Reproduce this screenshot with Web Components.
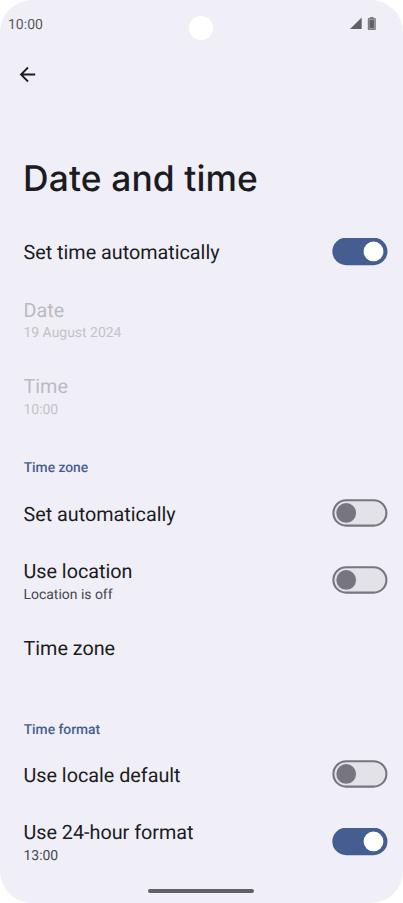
<!DOCTYPE html>
<html lang="en">
<head>
<meta charset="utf-8">
<title>Date and time</title>
<style>
html,body{margin:0;background:#fff}
body{width:403px;height:903px;overflow:hidden;font-family:Roboto,"Liberation Sans",sans-serif;color:#1b1b21;text-rendering:geometricPrecision}
</style>
</head>
<body>
<phone-screen>
  <status-bar slot="status">10:00</status-bar>
  <back-button></back-button>
  <page-title>Date and time</page-title>
  <setting-row>Set time automatically<toggle-switch slot="control" on></toggle-switch></setting-row>
  <setting-row two disabled>Date<span slot="summary">19 August 2024</span></setting-row>
  <setting-row two disabled>Time<span slot="summary">10:00</span></setting-row>
  <section-header>Time zone</section-header>
  <setting-row>Set automatically<toggle-switch slot="control"></toggle-switch></setting-row>
  <setting-row two>Use location<span slot="summary">Location is off</span><toggle-switch slot="control"></toggle-switch></setting-row>
  <setting-row two>Time zone</setting-row>
  <section-header>Time format</section-header>
  <setting-row>Use locale default<toggle-switch slot="control"></toggle-switch></setting-row>
  <setting-row two>Use 24-hour format<span slot="summary">13:00</span><toggle-switch slot="control" on></toggle-switch></setting-row>
</phone-screen>
<script>
const define = (name, html) => {
  const t = document.createElement('template');
  t.innerHTML = html;
  customElements.define(name, class extends HTMLElement {
    constructor() {
      super();
      this.attachShadow({mode: 'open'}).append(t.content.cloneNode(true));
    }
  });
};
define('phone-screen', `<style>
:host{display:flex;flex-direction:column;width:403px;height:903px;background:#f0eff7;border-radius:32px;overflow:hidden;position:relative}
main{flex:1;min-height:0}
footer{height:23px;display:flex;justify-content:center;align-items:flex-start}
i{display:block;width:106px;height:4px;border-radius:2px;background:#606066;margin:9.4px 1px 0 0}
</style><slot name="status"></slot><main><slot></slot></main><footer><i></i></footer>`);
define('status-bar', `<style>
:host{display:grid;grid-template-columns:1fr 24px 1fr;height:50px;box-sizing:border-box;padding:0 27px 0 8px;font-size:14px;font-weight:450;color:#5a5a60;line-height:50px}
.cam{width:24px;height:24px;border-radius:50%;background:#fff;position:absolute;left:189px;top:15.5px}
.icons{grid-column:3;justify-self:end;padding-top:16px;line-height:0}
</style><span><slot></slot></span><div class="cam"></div><div class="icons">
<svg width="28" height="16" viewBox="348 16 28 16"><path d="M350 29 361.7 17.6V29z" fill="#606066"/><path d="M370 17h3.5v1h1.3q1 0 1 1v10q0 1-1 1h-6q-1 0-1-1V19q0-1 1-1H370z" fill="#77777c"/><rect x="369.2" y="19.3" width="5.2" height="9.4" fill="none" stroke="#a9a9af" stroke-width=".7"/><rect x="369.7" y="20" width="4.2" height="8" fill="#606066"/></svg></div>`);
define('back-button', `<style>:host{display:block;height:50px;padding-left:18px;line-height:0}svg{margin-top:14.8px}</style>
<svg width="19" height="19" viewBox="0 0 19 19" fill="none" stroke="#1b1b21" stroke-width="1.8"><path d="M17.2 9.5H3.2M10 2.5 3 9.5l7 7"/></svg>`);
define('page-title', `<style>:host{display:block;height:122.8px;box-sizing:border-box;padding:57px 23px 0;font-family:Inter,Roboto,sans-serif;font-size:35.4px;line-height:44px;font-weight:450;letter-spacing:.12px;white-space:nowrap}</style><slot></slot>`);
define('section-header', `<style>:host{display:block;height:50.5px;box-sizing:border-box;padding:24.5px 23.7px 0;font-size:13.8px;font-weight:500;line-height:20px;color:#465d91;white-space:nowrap}</style><slot></slot>`);
define('setting-row', `<style>
:host{display:flex;height:57.55px;box-sizing:border-box;padding:0 15px 0 23.5px;align-items:center;justify-content:space-between}
:host([two]){height:76.7px}
.text{align-self:flex-start;padding-top:16.3px;display:flex;flex-direction:column;white-space:nowrap}
.title{font-size:19.75px;line-height:28px}
.summary{font-size:13.95px;line-height:18px;color:#46464f;margin-top:-.3px}
:host([disabled]) .title{color:#bbbac1}:host([disabled]) .summary{color:#c3c2c9}
</style><div class="text"><div class="title"><slot></slot></div><div class="summary"><slot name="summary"></slot></div></div><slot name="control"></slot>`);
define('toggle-switch', `<style>
:host{display:block;line-height:0}
.track{fill:#e3e2e8;stroke:#777680;stroke-width:2.1}
.thumb{fill:#777680}
:host([on]) .track{fill:#465d91;stroke:#465d91}
:host([on]) .thumb{fill:#fff;transform:translateX(27.3px)}
:host([on]) svg g{transform:translateY(-.5px)}
</style><svg width="56" height="28" viewBox="0 0 56 28"><g><rect class="track" x="1.4" y="1.2" width="53" height="25.4" rx="12.7"/><circle class="thumb" cx="14.2" cy="13.9" r="9.9"/></g></svg>`);
</script>
</body>
</html>
